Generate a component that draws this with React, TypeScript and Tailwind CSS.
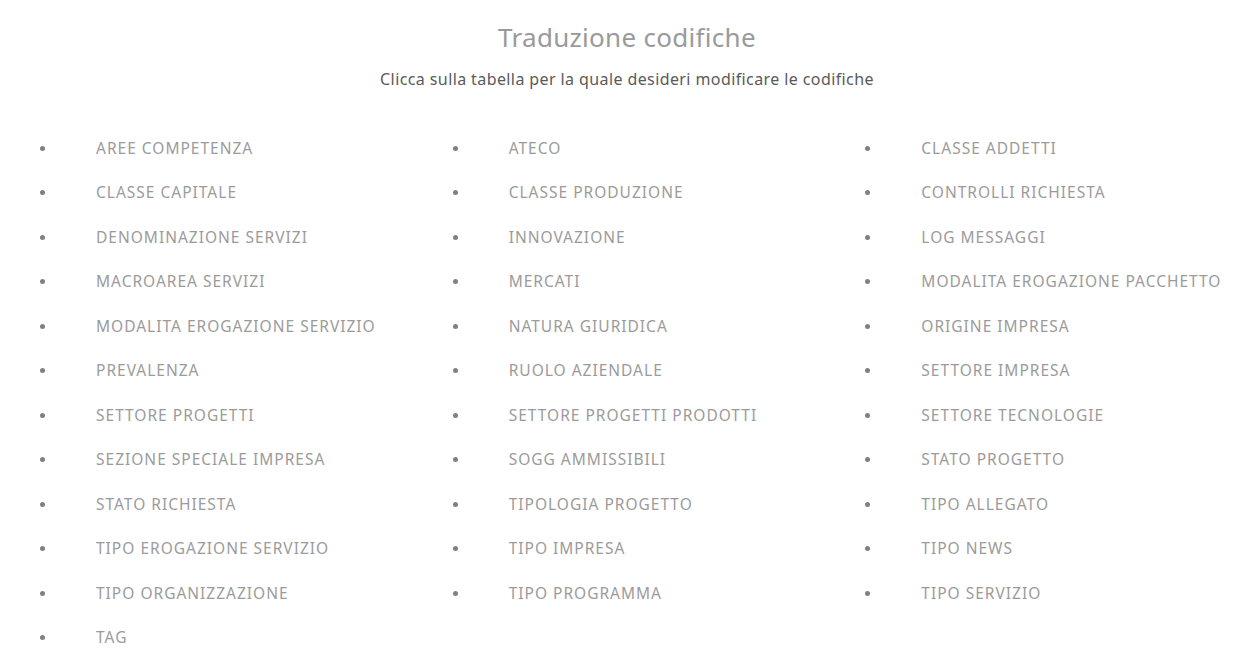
const col1 = ["AREE COMPETENZA","CLASSE CAPITALE","DENOMINAZIONE SERVIZI","MACROAREA SERVIZI","MODALITA EROGAZIONE SERVIZIO","PREVALENZA","SETTORE PROGETTI","SEZIONE SPECIALE IMPRESA","STATO RICHIESTA","TIPO EROGAZIONE SERVIZIO","TIPO ORGANIZZAZIONE","TAG"];
const col2 = ["ATECO","CLASSE PRODUZIONE","INNOVAZIONE","MERCATI","NATURA GIURIDICA","RUOLO AZIENDALE","SETTORE PROGETTI PRODOTTI","SOGG AMMISSIBILI","TIPOLOGIA PROGETTO","TIPO IMPRESA","TIPO PROGRAMMA"];
const col3 = ["CLASSE ADDETTI","CONTROLLI RICHIESTA","LOG MESSAGGI","MODALITA EROGAZIONE PACCHETTO","ORIGINE IMPRESA","SETTORE IMPRESA","SETTORE TECNOLOGIE","STATO PROGETTO","TIPO ALLEGATO","TIPO NEWS","TIPO SERVIZIO"];

function Col({ items }: { items: string[] }) {
  return (
    <ul className="flex flex-col">
      {items.map((t) => (
        <li key={t} className="flex items-center h-[44.5px]">
          <span className="w-[5px] h-[5px] rounded-full bg-[#808080] ml-[32px] mr-[51px]" />
          <a className="text-[15.5px] text-[#9b9b9b] tracking-[1px] cursor-pointer">{t}</a>
        </li>
      ))}
    </ul>
  );
}

export default function App() {
  return (
    <div className="w-[1254px] h-[648px] overflow-hidden bg-white" style={{ fontFamily: '"Noto Sans", sans-serif' }}>
      <div className="flex flex-col items-center pt-[19px]">
        <h1 className="text-[26px] text-[#9a9a9a] leading-[36px] tracking-[0.3px]">Traduzione codifiche</h1>
        <p className="text-[16px] text-[#5a5a5a] mt-[13px] leading-[22px] tracking-[0.4px]">Clicca sulla tabella per la quale desideri modificare le codifiche</p>
      </div>
      <div className="grid grid-cols-3 px-[8px] mt-[36px]">
        <Col items={col1} />
        <Col items={col2} />
        <Col items={col3} />
      </div>
    </div>
  );
}
